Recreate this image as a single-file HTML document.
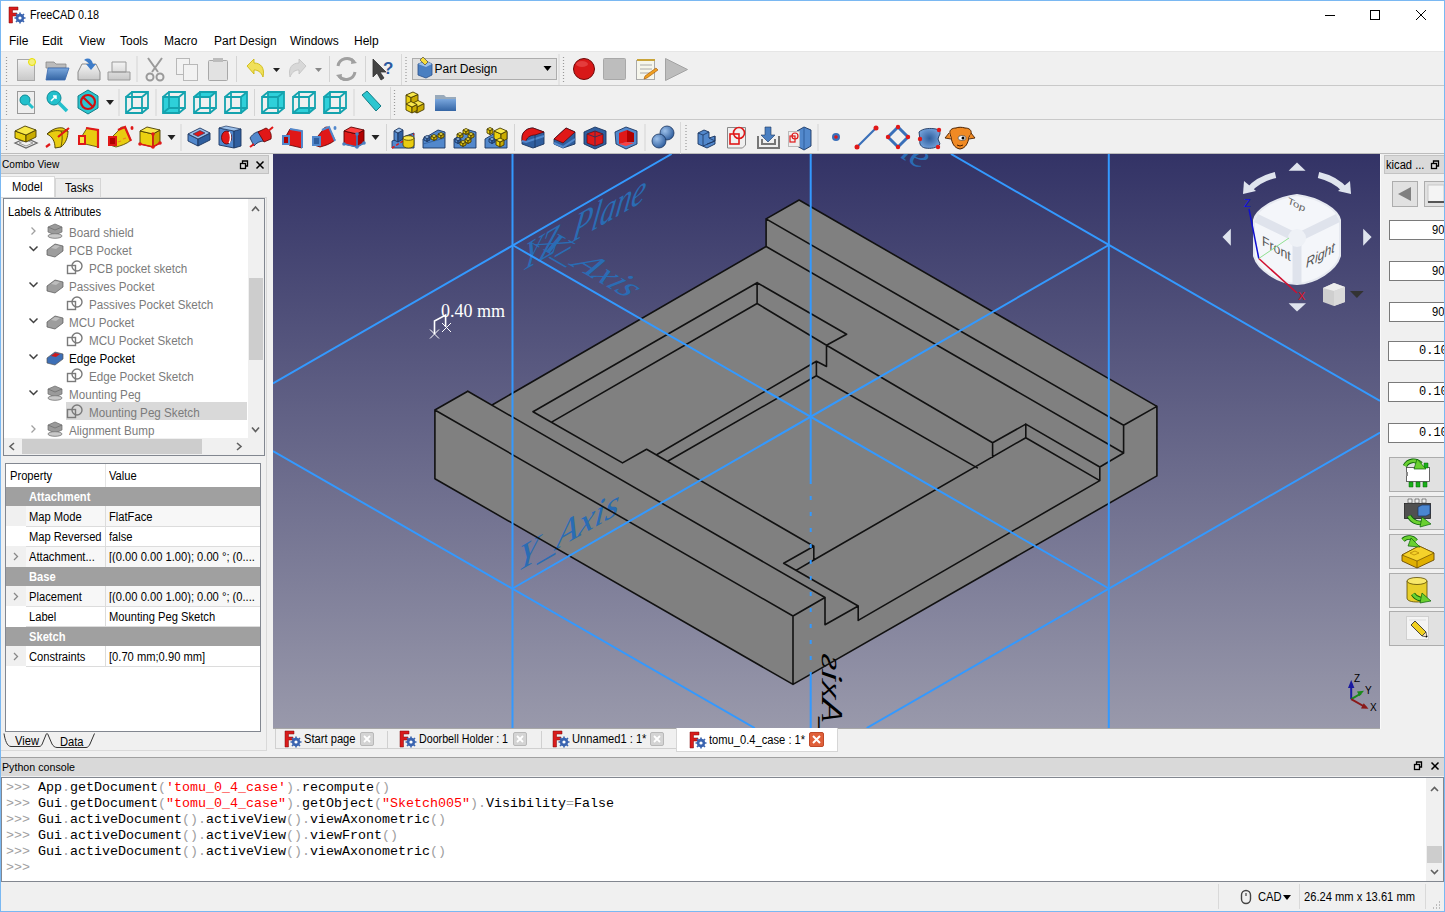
<!DOCTYPE html>
<html><head><meta charset="utf-8">
<style>
*{margin:0;padding:0;box-sizing:border-box}
html,body{width:1445px;height:912px;overflow:hidden;background:#f0f0f0;font-family:"Liberation Sans",sans-serif;font-size:12px;color:#000}
.a{position:absolute}
.t{position:absolute;white-space:nowrap;line-height:1;transform-origin:0 0;transform:scaleX(.93)}
.m{transform:none}
svg{position:absolute;overflow:visible}
</style></head><body>
<!-- window frame -->

<!-- title + menu -->
<div class="a" style="left:1px;top:1px;width:1443px;height:50px;background:#fff"></div>
<div class="a" style="left:1px;top:51px;width:1443px;height:1px;background:#e6e6e6"></div>
<!--TITLE-->
<div class="t" style="left:30px;top:9px;transform:scaleX(.9)">FreeCAD 0.18</div>
<div class="t" style="left:9px;top:35px;transform:none">File</div>
<div class="t" style="left:42px;top:35px;transform:none">Edit</div>
<div class="t" style="left:79px;top:35px;transform:none">View</div>
<div class="t" style="left:120px;top:35px;transform:none">Tools</div>
<div class="t" style="left:164px;top:35px;transform:none">Macro</div>
<div class="t" style="left:214px;top:35px;transform:none">Part Design</div>
<div class="t" style="left:290px;top:35px;transform:none">Windows</div>
<div class="t" style="left:354px;top:35px;transform:none">Help</div>
<svg style="left:0;top:0" width="1445" height="30">
<line x1="1325" y1="15.5" x2="1335" y2="15.5" stroke="#000" stroke-width="1"/>
<rect x="1370.5" y="10.5" width="9" height="9" fill="none" stroke="#000" stroke-width="1"/>
<path d="M1416 10L1426 20M1426 10L1416 20" stroke="#000" stroke-width="1"/>
</svg>
<!-- toolbar separators -->
<div class="a" style="left:1px;top:85px;width:1443px;height:1px;background:#c9c9c9"></div>
<div class="a" style="left:1px;top:119px;width:1443px;height:1px;background:#c9c9c9"></div>
<div class="a" style="left:1px;top:153px;width:1443px;height:1px;background:#bcbcbc"></div>

<svg style="left:0;top:52px" width="1445" height="102">
<defs>
<linearGradient id="gy" x1="0" y1="0" x2="0" y2="1"><stop offset="0" stop-color="#fdf56a"/><stop offset="1" stop-color="#d9c400"/></linearGradient>
<linearGradient id="gb" x1="0" y1="0" x2="0" y2="1"><stop offset="0" stop-color="#7aa7dd"/><stop offset="1" stop-color="#3465a4"/></linearGradient>
<linearGradient id="gc" x1="0" y1="0" x2="0" y2="1"><stop offset="0" stop-color="#4fe0ea"/><stop offset="1" stop-color="#14b5c2"/></linearGradient>
<linearGradient id="gg" x1="0" y1="0" x2="0" y2="1"><stop offset="0" stop-color="#f4f4f4"/><stop offset="1" stop-color="#c8c8c8"/></linearGradient>
<g id="grip"><path d="M0 0v1M0 3v1M0 6v1M0 9v1M0 12v1M0 15v1M0 18v1M0 21v1M0 24v1" stroke="#9a9a9a" stroke-width="1.2"/></g>
</defs>
<!-- ROW 1 : center y = 17 (abs 69) -->
<path transform="translate(6.5 5.0)" d="M0 0v1M0 3v1M0 6v1M0 9v1M0 12v1M0 15v1M0 18v1M0 21v1M0 24v1" stroke="#9a9a9a" stroke-width="1.2"/>
<rect x="17.5" y="7.5" width="17" height="21" fill="url(#gg)" stroke="#a8a8a8"/><circle cx="32" cy="10" r="3.5" fill="#f5f07a" stroke="#e8e000"/>
<path d="M46 10h8l2 2h10v4H46z" fill="#bbb" stroke="#888" stroke-width=".8"/><path d="M48 16h21l-4 12H46z" fill="url(#gb)" stroke="#3a6ab0" stroke-width=".8"/>
<path d="M78 20l4-8h14l4 8v8H78z" fill="url(#gg)" stroke="#8a8a8a"/><path d="M84 8c4-3 8-1 9 4h3l-5 6-5-6h3c-1-2-3-3-5-4z" fill="#3d7cc9"/>
<path d="M108 20h22v8h-22z M112 10h14v10h-14z" fill="url(#gg)" stroke="#9a9a9a"/>
<rect x="136.5" y="4" width="1" height="26" fill="#d4d4d4"/>
<path d="M148 6l10 14M162 6l-10 14" stroke="#9a9a9a" stroke-width="2"/><circle cx="150" cy="25" r="3.5" fill="none" stroke="#9a9a9a" stroke-width="2"/><circle cx="160" cy="25" r="3.5" fill="none" stroke="#9a9a9a" stroke-width="2"/>
<rect x="176.5" y="6.5" width="13" height="16" fill="#f2f2f2" stroke="#b8b8b8"/><rect x="183.5" y="12.5" width="14" height="16" fill="#f2f2f2" stroke="#b8b8b8"/>
<rect x="208.5" y="8.5" width="19" height="20" rx="1" fill="#e2e2e2" stroke="#a8a8a8"/><rect x="213" y="6" width="10" height="4" fill="#bcbcbc"/>
<rect x="236" y="4" width="1" height="26" fill="#d4d4d4"/>
<path d="M247 14l7-7v4c7 0 11 5 9 14-2-5-5-7-9-7v4z" fill="#f0e05a" stroke="#c9b400" stroke-width=".8"/><path d="M273 16h7l-3.5 4z" fill="#222"/>
<path d="M306 14l-7-7v4c-7 0-11 5-9 14 2-5 5-7 9-7v4z" fill="#d8d8d8" stroke="#c0c0c0" stroke-width=".8"/><path d="M315 16h7l-3.5 4z" fill="#888"/>
<rect x="329" y="4" width="1" height="26" fill="#d4d4d4"/>
<path d="M338 14a9 9 0 0 1 16-4M355 20a9 9 0 0 1-16 4" fill="none" stroke="#a0a0a0" stroke-width="3"/><path d="M352 6l5 5-6 1z M341 28l-5-5 6-1z" fill="#a0a0a0"/>
<rect x="365" y="4" width="1" height="26" fill="#d4d4d4"/>
<path d="M373 7l0 18 4-4 4 7 3-2-4-6 6 0z" fill="#444" stroke="#333" stroke-width=".8"/><text x="383" y="22" font-family="Liberation Sans" font-size="17" font-weight="bold" fill="#2c5aa0">?</text>
<rect x="401" y="2" width="1" height="31" fill="#d8d8d8"/>
<path transform="translate(406.0 5.0)" d="M0 0v1M0 3v1M0 6v1M0 9v1M0 12v1M0 15v1M0 18v1M0 21v1M0 24v1" stroke="#9a9a9a" stroke-width="1.2"/>
<rect x="412.5" y="6.5" width="144" height="21" fill="#e1e1e1" stroke="#adadad"/>
<path d="M418 12l8-3 6 3v11l-6 3-8-3z" fill="#4a7fc1" stroke="#2a4f8a" stroke-width=".8"/><path d="M418 12l8-3 6 3-6 3z" fill="#9cc1ea"/><path d="M420 8l5 5 3-3-5-5z" fill="#f5dc3a" stroke="#333" stroke-width=".6"/>
<text x="434.5" y="21" font-family="Liberation Sans" font-size="12" fill="#000">Part Design</text>
<path d="M543.5 14h8l-4 5z" fill="#000"/>
<rect x="558.5" y="2" width="1" height="31" fill="#d8d8d8"/>
<path transform="translate(563.5 5.0)" d="M0 0v1M0 3v1M0 6v1M0 9v1M0 12v1M0 15v1M0 18v1M0 21v1M0 24v1" stroke="#9a9a9a" stroke-width="1.2"/>
<circle cx="584" cy="17" r="10.5" fill="#d81818" stroke="#6e0a0a" stroke-width="1"/><ellipse cx="582" cy="12" rx="6" ry="3" fill="#f06060" opacity=".5"/>
<rect x="603.5" y="6.5" width="22" height="21" rx="1" fill="#bdbdbd" stroke="#a8a8a8"/>
<rect x="636.5" y="8.5" width="18" height="19" fill="#f6f6ec" stroke="#aaa"/><path d="M637 8h18" stroke="#c9a43a" stroke-width="2"/><path d="M640 13h12M640 17h12M640 21h10" stroke="#999" stroke-width=".8"/><path d="M645 24l11-8 2 2-11 8-3 1z" fill="#f0a020" stroke="#a05000" stroke-width=".6"/>
<path d="M665.5 6.5l22 11-22 11z" fill="#bdbdbd" stroke="#a3a3a3"/>
</svg>


<svg style="left:0;top:86px" width="1445" height="68">
<defs>
<g id="grip2"><path d="M0 0v1M0 3v1M0 6v1M0 9v1M0 12v1M0 15v1M0 18v1M0 21v1M0 24v1" stroke="#9a9a9a" stroke-width="1.2"/></g>
<g id="cubeW"><path d="M2 6l8-4h12v16l-8 4H2z" fill="none" stroke="#1a9aa6" stroke-width="2"/><path d="M2 6h12v16M14 6l8-4" fill="none" stroke="#1a9aa6" stroke-width="2"/></g>
</defs>
<!-- ROW 2 center local y=16 -->
<path transform="translate(6.5 4.0)" d="M0 0v1M0 3v1M0 6v1M0 9v1M0 12v1M0 15v1M0 18v1M0 21v1M0 24v1" stroke="#9a9a9a" stroke-width="1.2"/>
<rect x="17.5" y="5.5" width="17" height="22" fill="#eee" stroke="#999"/><circle cx="25" cy="14" r="5" fill="#22c0cc" stroke="#0d8a95"/><path d="M28 17l5 5" stroke="#22c0cc" stroke-width="3"/>
<circle cx="54" cy="12" r="7" fill="#22c0cc" stroke="#0d8a95"/><path d="M59 17l8 8" stroke="#22c0cc" stroke-width="3.5"/><path d="M51 15l5-5M53 10h3v3" stroke="#fff" stroke-width="1.5" fill="none"/>
<path d="M88 4l10 6v12l-10 6-10-6V10z" fill="#2cc6d0" stroke="#137f88"/><circle cx="88" cy="16" r="7" fill="none" stroke="#d01010" stroke-width="2.2"/><path d="M83 11l10 10" stroke="#d01010" stroke-width="2.2"/>
<path d="M106 14h8l-4 5z" fill="#222"/>
<rect x="118.5" y="3" width="1" height="27" fill="#d4d4d4"/>
<path d="M126 11h16v16h-16zM132 6h16v16h-16zM126 11L132 6M142 11L148 6M142 27L148 22M126 27L132 22" fill="none" stroke="#14a3ae" stroke-width="1.8"/>
<rect x="155.5" y="3" width="1" height="27" fill="#d4d4d4"/>
<path d="M163 11h16v16h-16z" fill="#2ed0da"/><path d="M163 11h16v16h-16zM169 6h16v16h-16zM163 11L169 6M179 11L185 6M179 27L185 22M163 27L169 22" fill="none" stroke="#14a3ae" stroke-width="1.8"/><path d="M194 11L200 6H216L210 11z" fill="#2ed0da"/><path d="M194 11h16v16h-16zM200 6h16v16h-16zM194 11L200 6M210 11L216 6M210 27L216 22M194 27L200 22" fill="none" stroke="#14a3ae" stroke-width="1.8"/><path d="M241 11L247 6V22L241 27z" fill="#2ed0da"/><path d="M225 11h16v16h-16zM231 6h16v16h-16zM225 11L231 6M241 11L247 6M241 27L247 22M225 27L231 22" fill="none" stroke="#14a3ae" stroke-width="1.8"/>
<rect x="254" y="3" width="1" height="27" fill="#d4d4d4"/>
<path d="M268 6h16v16h-16z" fill="#2ed0da"/><path d="M262 11h16v16h-16zM268 6h16v16h-16zM262 11L268 6M278 11L284 6M278 27L284 22M262 27L268 22" fill="none" stroke="#14a3ae" stroke-width="1.8"/><path d="M293 27L299 22H315L309 27z" fill="#2ed0da"/><path d="M293 11h16v16h-16zM299 6h16v16h-16zM293 11L299 6M309 11L315 6M309 27L315 22M293 27L299 22" fill="none" stroke="#14a3ae" stroke-width="1.8"/><path d="M324 11L330 6V22L324 27z" fill="#2ed0da"/><path d="M324 11h16v16h-16zM330 6h16v16h-16zM324 11L330 6M340 11L346 6M340 27L346 22M324 27L330 22" fill="none" stroke="#14a3ae" stroke-width="1.8"/>
<rect x="353.5" y="3" width="1" height="27" fill="#d4d4d4"/>
<path d="M362 9l5-4 14 15-5 5z" fill="#2cc6d0" stroke="#127c85"/>
<rect x="390" y="1" width="1" height="32" fill="#d8d8d8"/>
<path transform="translate(394.5 4.0)" d="M0 0v1M0 3v1M0 6v1M0 9v1M0 12v1M0 15v1M0 18v1M0 21v1M0 24v1" stroke="#9a9a9a" stroke-width="1.2"/>
<polygon points="406.0,9.0 411.0,11.5 411.0,20.5 406.0,18.0" fill="#ead010" stroke="#4a3c00" stroke-width="0.9" stroke-linejoin="round"/><polygon points="411.0,11.5 418.0,8.5 418.0,17.5 411.0,20.5" fill="#c9ab00" stroke="#4a3c00" stroke-width="0.9" stroke-linejoin="round"/><polygon points="406.0,9.0 413.0,6.0 418.0,8.5 411.0,11.5" fill="#f8e84a" stroke="#4a3c00" stroke-width="0.9" stroke-linejoin="round"/><polygon points="411.0,18.0 417.0,21.0 417.0,27.0 411.0,24.0" fill="#ead010" stroke="#4a3c00" stroke-width="0.9" stroke-linejoin="round"/><polygon points="417.0,21.0 424.0,17.5 424.0,23.5 417.0,27.0" fill="#c9ab00" stroke="#4a3c00" stroke-width="0.9" stroke-linejoin="round"/><polygon points="411.0,18.0 418.0,14.5 424.0,17.5 417.0,21.0" fill="#f8e84a" stroke="#4a3c00" stroke-width="0.9" stroke-linejoin="round"/><polygon points="406.0,18.0 412.0,21.0 412.0,27.0 406.0,24.0" fill="#ead010" stroke="#4a3c00" stroke-width="0.9" stroke-linejoin="round"/><polygon points="412.0,21.0 417.0,18.5 417.0,24.5 412.0,27.0" fill="#c9ab00" stroke="#4a3c00" stroke-width="0.9" stroke-linejoin="round"/><polygon points="406.0,18.0 411.0,15.5 417.0,18.5 412.0,21.0" fill="#f8e84a" stroke="#4a3c00" stroke-width="0.9" stroke-linejoin="round"/>
<path d="M435 9h9l2 2h10v14h-21z" fill="#9ab" /><path d="M435 13h21v12h-21z" fill="url(#gb)"/>
<!-- ROW 3 center local y=51 -->
<path transform="translate(6.5 39.0)" d="M0 0v1M0 3v1M0 6v1M0 9v1M0 12v1M0 15v1M0 18v1M0 21v1M0 24v1" stroke="#9a9a9a" stroke-width="1.2"/>
<polygon points="15,57 26,52 37,57 26,62" fill="none" stroke="#6a6a6a" stroke-width="1.3"/><polygon points="19,57 26,54 33,57 26,60" fill="none" stroke="#9a9a9a" stroke-width="1"/>
<polygon points="15.0,45.0 26.0,49.0 26.0,56.0 15.0,52.0" fill="#ead010" stroke="#4a3c00" stroke-width="0.9" stroke-linejoin="round"/><polygon points="26.0,49.0 36.0,44.0 36.0,51.0 26.0,56.0" fill="#c9ab00" stroke="#4a3c00" stroke-width="0.9" stroke-linejoin="round"/><polygon points="15.0,45.0 25.0,40.0 36.0,44.0 26.0,49.0" fill="#f8e84a" stroke="#4a3c00" stroke-width="0.9" stroke-linejoin="round"/>
<path d="M47 48C52 43 58 41 63 42L68 45C68 51 66 57 61 61L55 62C55 56 53 51 47 48z" fill="#e8cc10" stroke="#4a3c00" stroke-width=".9"/><path d="M47 48C51 45 56 44 61 45L68 45" fill="none" stroke="#4a3c00" stroke-width=".8"/><path d="M61 45C63 50 62 56 61 61" fill="none" stroke="#4a3c00" stroke-width=".8"/><path d="M46 61L50 58M58 51L69 42" stroke="#e01818" stroke-width="2.2"/>
<path d="M82 50L87 42L98 44L98 61L85 58z" fill="#e8cc10" stroke="#4a3c00" stroke-width=".8"/><path d="M86 42L98 44L98 62" fill="none" stroke="#e01818" stroke-width="2.2"/><rect x="79" y="50" width="6" height="8" fill="#f8e84a" stroke="#e01818" stroke-width="2"/>
<path d="M113 50L118 45C120 41 123 40 125 42L131 54C127 58 120 60 116 61L110 59z" fill="#e8cc10" stroke="#4a3c00" stroke-width=".8"/><path d="M118 44L125 41L131 55" fill="none" stroke="#e01818" stroke-width="2.2"/><rect x="109" y="51" width="7" height="8" fill="#b00000" stroke="#e01818" stroke-width="2"/><ellipse cx="132" cy="42" rx="1.5" ry="2" fill="#e01818"/><path d="M118 56l3-1M123 53l3-1" stroke="#f08020" stroke-width="1.2"/>
<polygon points="140.0,45.0 153.0,48.0 153.0,61.0 140.0,58.0" fill="#ead010" stroke="#4a3c00" stroke-width="0.9" stroke-linejoin="round"/><polygon points="153.0,48.0 160.0,44.0 160.0,57.0 153.0,61.0" fill="#c9ab00" stroke="#4a3c00" stroke-width="0.9" stroke-linejoin="round"/><polygon points="140.0,45.0 147.0,41.0 160.0,44.0 153.0,48.0" fill="#f8e84a" stroke="#4a3c00" stroke-width="0.9" stroke-linejoin="round"/>
<path d="M153 48V61M140 58L153 61L160 57" fill="none" stroke="#e01818" stroke-width="1.6"/><circle cx="153" cy="48" r="1.8" fill="#e01818"/><circle cx="153" cy="61" r="1.8" fill="#e01818"/><circle cx="140" cy="58" r="1.8" fill="#e01818"/><circle cx="160" cy="57" r="1.8" fill="#e01818"/>
<path d="M167.5 49h8l-4 5z" fill="#222"/>
<rect x="180.5" y="38" width="1" height="27" fill="#d4d4d4"/>
<polygon points="188.0,48.0 198.0,53.0 198.0,60.0 188.0,55.0" fill="#5288cc" stroke="#1b3560" stroke-width="0.9" stroke-linejoin="round"/><polygon points="198.0,53.0 210.0,47.0 210.0,54.0 198.0,60.0" fill="#2f5e9e" stroke="#1b3560" stroke-width="0.9" stroke-linejoin="round"/><polygon points="188.0,48.0 200.0,42.0 210.0,47.0 198.0,53.0" fill="#9cc0ea" stroke="#1b3560" stroke-width="0.9" stroke-linejoin="round"/>
<polygon points="193,48 200,44.5 205,47 198,50.5" fill="#e01818" stroke="#1b3560" stroke-width=".6"/>
<path d="M219 42L234 45V62L219 59z" fill="#5288cc" stroke="#1b3560" stroke-width=".9"/><path d="M234 45L241 43V60L234 62z" fill="#2f5e9e" stroke="#1b3560" stroke-width=".9"/><path d="M219 42L226 40L241 43L234 45z" fill="#9cc0ea" stroke="#1b3560" stroke-width=".7"/><ellipse cx="226.5" cy="51.5" rx="5" ry="6.5" fill="#e01818" stroke="#5a0000" stroke-width=".8"/><path d="M229 46c2 2 2 9 0 11" stroke="#fff" stroke-width="1.5" fill="none"/>
<path d="M250 52C253 47 258 45 262 45L264 55C260 55 256 57 254 60z" fill="#5288cc" stroke="#1b3560" stroke-width=".9"/><path d="M258 46L266 42C270 44 272 48 271 53L264 56z" fill="#e01818" stroke="#5a0000" stroke-width=".8"/><path d="M250 61L254 58M266 47L273 41" stroke="#e01818" stroke-width="2"/>
<path d="M286 50L290 43L302 45V62L289 59z" fill="#e01818" stroke="#5a0000" stroke-width=".8"/><path d="M290 43L302 45V62" fill="none" stroke="#5288cc" stroke-width="2"/><rect x="283" y="50" width="6" height="8" fill="#b00000" stroke="#5288cc" stroke-width="2"/>
<path d="M318 50L322 45C324 41 327 40 329 42L335 54C331 58 324 60 320 61L314 59z" fill="#e01818" stroke="#5a0000" stroke-width=".8"/><path d="M322 44L329 41L335 55" fill="none" stroke="#5288cc" stroke-width="2"/><rect x="313" y="51" width="7" height="8" fill="#2f5e9e" stroke="#5288cc" stroke-width="2"/><ellipse cx="335" cy="42" rx="1.5" ry="2" fill="#5288cc"/>
<polygon points="344.0,45.0 357.0,48.0 357.0,61.0 344.0,58.0" fill="#e01818" stroke="#5a0000" stroke-width="0.9" stroke-linejoin="round"/><polygon points="357.0,48.0 364.0,44.0 364.0,57.0 357.0,61.0" fill="#b00000" stroke="#5a0000" stroke-width="0.9" stroke-linejoin="round"/><polygon points="344.0,45.0 351.0,41.0 364.0,44.0 357.0,48.0" fill="#ff4040" stroke="#5a0000" stroke-width="0.9" stroke-linejoin="round"/>
<path d="M357 48V61M344 58L357 61L364 57" fill="none" stroke="#4a7fc1" stroke-width="1.6"/><circle cx="357" cy="48" r="1.8" fill="#4a7fc1"/><circle cx="357" cy="61" r="1.8" fill="#4a7fc1"/><circle cx="344" cy="58" r="1.8" fill="#4a7fc1"/><circle cx="364" cy="57" r="1.8" fill="#4a7fc1"/>
<path d="M371.5 49h8l-4 5z" fill="#222"/>
<rect x="386" y="38" width="1" height="27" fill="#d4d4d4"/>
<path d="M392 55L414 47V62H392z" fill="#5288cc" stroke="#1b3560" stroke-width=".9"/>
<polygon points="394.0,45.0 398.0,47.0 398.0,56.0 394.0,54.0" fill="#5288cc" stroke="#1b3560" stroke-width="0.9" stroke-linejoin="round"/><polygon points="398.0,47.0 403.0,44.0 403.0,53.0 398.0,56.0" fill="#2f5e9e" stroke="#1b3560" stroke-width="0.9" stroke-linejoin="round"/><polygon points="394.0,45.0 399.0,42.0 403.0,44.0 398.0,47.0" fill="#9cc0ea" stroke="#1b3560" stroke-width="0.9" stroke-linejoin="round"/>
<path d="M392 62L414 48" stroke="#e01818" stroke-width="1.5" stroke-dasharray="3 2"/><path d="M403 52v7c0 2 3 3 5.5 3s5.5-1 5.5-3v-7z" fill="#e8cc10" stroke="#4a3c00" stroke-width=".8"/><ellipse cx="408.5" cy="52" rx="5.5" ry="2.3" fill="#f8e84a" stroke="#4a3c00" stroke-width=".8"/>
<path d="M423 53L438 44L445 46V62H423z" fill="#5288cc" stroke="#1b3560" stroke-width=".9"/><path d="M423 58L445 52" stroke="#2f5e9e" stroke-width=".8"/>
<polygon points="424.0,51.0 427.0,52.5 427.0,55.5 424.0,54.0" fill="#5288cc" stroke="#1b3560" stroke-width="0.9" stroke-linejoin="round"/><polygon points="427.0,52.5 430.0,51.0 430.0,54.0 427.0,55.5" fill="#2f5e9e" stroke="#1b3560" stroke-width="0.9" stroke-linejoin="round"/><polygon points="424.0,51.0 427.0,49.5 430.0,51.0 427.0,52.5" fill="#9cc0ea" stroke="#1b3560" stroke-width="0.9" stroke-linejoin="round"/>
<polygon points="431.0,50.0 434.0,51.5 434.0,54.5 431.0,53.0" fill="#ead010" stroke="#4a3c00" stroke-width="0.9" stroke-linejoin="round"/><polygon points="434.0,51.5 437.0,50.0 437.0,53.0 434.0,54.5" fill="#c9ab00" stroke="#4a3c00" stroke-width="0.9" stroke-linejoin="round"/><polygon points="431.0,50.0 434.0,48.5 437.0,50.0 434.0,51.5" fill="#f8e84a" stroke="#4a3c00" stroke-width="0.9" stroke-linejoin="round"/>
<polygon points="438.0,48.0 441.0,49.5 441.0,52.5 438.0,51.0" fill="#ead010" stroke="#4a3c00" stroke-width="0.9" stroke-linejoin="round"/><polygon points="441.0,49.5 444.0,48.0 444.0,51.0 441.0,52.5" fill="#c9ab00" stroke="#4a3c00" stroke-width="0.9" stroke-linejoin="round"/><polygon points="438.0,48.0 441.0,46.5 444.0,48.0 441.0,49.5" fill="#f8e84a" stroke="#4a3c00" stroke-width="0.9" stroke-linejoin="round"/>
<path d="M454 53L469 44L476 46V62H454z" fill="#5288cc" stroke="#1b3560" stroke-width=".9"/>
<polygon points="457.0,48.0 460.0,49.5 460.0,52.5 457.0,51.0" fill="#ead010" stroke="#4a3c00" stroke-width="0.9" stroke-linejoin="round"/><polygon points="460.0,49.5 463.0,48.0 463.0,51.0 460.0,52.5" fill="#c9ab00" stroke="#4a3c00" stroke-width="0.9" stroke-linejoin="round"/><polygon points="457.0,48.0 460.0,46.5 463.0,48.0 460.0,49.5" fill="#f8e84a" stroke="#4a3c00" stroke-width="0.9" stroke-linejoin="round"/>
<polygon points="463.0,44.0 466.0,45.5 466.0,48.5 463.0,47.0" fill="#ead010" stroke="#4a3c00" stroke-width="0.9" stroke-linejoin="round"/><polygon points="466.0,45.5 469.0,44.0 469.0,47.0 466.0,48.5" fill="#c9ab00" stroke="#4a3c00" stroke-width="0.9" stroke-linejoin="round"/><polygon points="463.0,44.0 466.0,42.5 469.0,44.0 466.0,45.5" fill="#f8e84a" stroke="#4a3c00" stroke-width="0.9" stroke-linejoin="round"/>
<polygon points="468.0,48.0 471.0,49.5 471.0,52.5 468.0,51.0" fill="#ead010" stroke="#4a3c00" stroke-width="0.9" stroke-linejoin="round"/><polygon points="471.0,49.5 474.0,48.0 474.0,51.0 471.0,52.5" fill="#c9ab00" stroke="#4a3c00" stroke-width="0.9" stroke-linejoin="round"/><polygon points="468.0,48.0 471.0,46.5 474.0,48.0 471.0,49.5" fill="#f8e84a" stroke="#4a3c00" stroke-width="0.9" stroke-linejoin="round"/>
<polygon points="455.0,53.0 458.0,54.5 458.0,57.5 455.0,56.0" fill="#5288cc" stroke="#1b3560" stroke-width="0.9" stroke-linejoin="round"/><polygon points="458.0,54.5 461.0,53.0 461.0,56.0 458.0,57.5" fill="#2f5e9e" stroke="#1b3560" stroke-width="0.9" stroke-linejoin="round"/><polygon points="455.0,53.0 458.0,51.5 461.0,53.0 458.0,54.5" fill="#9cc0ea" stroke="#1b3560" stroke-width="0.9" stroke-linejoin="round"/>
<polygon points="465.0,53.0 468.0,54.5 468.0,57.5 465.0,56.0" fill="#ead010" stroke="#4a3c00" stroke-width="0.9" stroke-linejoin="round"/><polygon points="468.0,54.5 471.0,53.0 471.0,56.0 468.0,57.5" fill="#c9ab00" stroke="#4a3c00" stroke-width="0.9" stroke-linejoin="round"/><polygon points="465.0,53.0 468.0,51.5 471.0,53.0 468.0,54.5" fill="#f8e84a" stroke="#4a3c00" stroke-width="0.9" stroke-linejoin="round"/>
<polygon points="460.0,56.0 463.0,57.5 463.0,60.5 460.0,59.0" fill="#ead010" stroke="#4a3c00" stroke-width="0.9" stroke-linejoin="round"/><polygon points="463.0,57.5 466.0,56.0 466.0,59.0 463.0,60.5" fill="#c9ab00" stroke="#4a3c00" stroke-width="0.9" stroke-linejoin="round"/><polygon points="460.0,56.0 463.0,54.5 466.0,56.0 463.0,57.5" fill="#f8e84a" stroke="#4a3c00" stroke-width="0.9" stroke-linejoin="round"/>
<path d="M485 53L500 44L507 46V62H485z" fill="#5288cc" stroke="#1b3560" stroke-width=".9"/>
<polygon points="494.0,45.0 501.0,48.0 501.0,56.0 494.0,53.0" fill="#ead010" stroke="#4a3c00" stroke-width="0.9" stroke-linejoin="round"/><polygon points="501.0,48.0 507.0,45.0 507.0,53.0 501.0,56.0" fill="#c9ab00" stroke="#4a3c00" stroke-width="0.9" stroke-linejoin="round"/><polygon points="494.0,45.0 500.0,42.0 507.0,45.0 501.0,48.0" fill="#f8e84a" stroke="#4a3c00" stroke-width="0.9" stroke-linejoin="round"/>
<polygon points="487.0,43.0 490.0,44.5 490.0,48.5 487.0,47.0" fill="#ead010" stroke="#4a3c00" stroke-width="0.9" stroke-linejoin="round"/><polygon points="490.0,44.5 493.0,43.0 493.0,47.0 490.0,48.5" fill="#c9ab00" stroke="#4a3c00" stroke-width="0.9" stroke-linejoin="round"/><polygon points="487.0,43.0 490.0,41.5 493.0,43.0 490.0,44.5" fill="#f8e84a" stroke="#4a3c00" stroke-width="0.9" stroke-linejoin="round"/>
<polygon points="489.0,53.0 492.0,54.5 492.0,57.5 489.0,56.0" fill="#5288cc" stroke="#1b3560" stroke-width="0.9" stroke-linejoin="round"/><polygon points="492.0,54.5 495.0,53.0 495.0,56.0 492.0,57.5" fill="#2f5e9e" stroke="#1b3560" stroke-width="0.9" stroke-linejoin="round"/><polygon points="489.0,53.0 492.0,51.5 495.0,53.0 492.0,54.5" fill="#9cc0ea" stroke="#1b3560" stroke-width="0.9" stroke-linejoin="round"/>
<polygon points="496.0,54.0 500.0,56.0 500.0,61.0 496.0,59.0" fill="#ead010" stroke="#4a3c00" stroke-width="0.9" stroke-linejoin="round"/><polygon points="500.0,56.0 504.0,54.0 504.0,59.0 500.0,61.0" fill="#c9ab00" stroke="#4a3c00" stroke-width="0.9" stroke-linejoin="round"/><polygon points="496.0,54.0 500.0,52.0 504.0,54.0 500.0,56.0" fill="#f8e84a" stroke="#4a3c00" stroke-width="0.9" stroke-linejoin="round"/>
<rect x="514" y="38" width="1" height="27" fill="#d4d4d4"/>
<path d="M522 52C522 45 528 42 533 42L544 46V58L533 62L522 58z" fill="#2f5e9e" stroke="#1b3560" stroke-width=".9"/><path d="M522 52C522 45 528 42 533 42L544 46L535 49C530 49 526 52 526 56L522 55z" fill="#e01818" stroke="#5a0000" stroke-width=".7"/><path d="M522 55L526 56L535 53L544 50" fill="none" stroke="#5288cc" stroke-width="2"/><path d="M535 49V62" stroke="#1b3560" stroke-width=".8"/>
<path d="M554 53L566 42L575 46V58L563 62L554 58z" fill="#2f5e9e" stroke="#1b3560" stroke-width=".9"/><path d="M554 53L566 42L575 46L563 57z" fill="#e01818" stroke="#5a0000" stroke-width=".7"/><path d="M554 57L563 61L575 53" fill="none" stroke="#5288cc" stroke-width="2"/>
<path d="M584 46L595 41L606 45V58L595 63L584 58z" fill="#2f5e9e" stroke="#1b3560" stroke-width=".9"/><path d="M587 48L595 45L603 48V57L595 60L587 57z" fill="#e01818" stroke="#5a0000" stroke-width=".6"/><path d="M595 45V60M587 48L595 51L603 48" fill="none" stroke="#1b3560" stroke-width=".8"/>
<path d="M615 46L626 41L637 45V58L626 63L616 58z" fill="#5288cc" stroke="#1b3560" stroke-width=".9"/><path d="M619 47L627 44V56L619 58z" fill="#e01818"/><path d="M627 44L634 47V56L627 56z" fill="#b00000"/><path d="M619 58L627 56L634 57L626 60z" fill="#ff4040"/>
<rect x="644.5" y="38" width="1" height="27" fill="#d4d4d4"/>
<defs><radialGradient id="sph" cx=".35" cy=".35" r=".7"><stop offset="0" stop-color="#9cc0ea"/><stop offset="1" stop-color="#2f5e9e"/></radialGradient></defs><circle cx="667" cy="47" r="7" fill="url(#sph)" stroke="#1b3560" stroke-width=".8"/><circle cx="659" cy="55" r="7" fill="url(#sph)" stroke="#1b3560" stroke-width=".8"/>
<rect x="680" y="36" width="1" height="32" fill="#d8d8d8"/>
<path transform="translate(686.0 39.0)" d="M0 0v1M0 3v1M0 6v1M0 9v1M0 12v1M0 15v1M0 18v1M0 21v1M0 24v1" stroke="#9a9a9a" stroke-width="1.2"/>
<path d="M698 47L704 44L709 46V52L715 50V58L707 62L698 58z" fill="#5288cc" stroke="#1b3560" stroke-width=".9"/><path d="M698 47L703 49V60M703 49L709 46M709 52L715 55L707 58M715 50L715 55" fill="none" stroke="#1b3560" stroke-width=".8"/><path d="M703 60L715 55" stroke="#1b3560" stroke-width=".8"/>
<path d="M727.5 41.5H745.5V59L742.5 62H727.5z" fill="#f0f0f0" stroke="#888"/><rect x="730" y="48" width="9" height="10" fill="none" stroke="#e01818" stroke-width="1.6"/><circle cx="739" cy="47" r="5.5" fill="none" stroke="#e01818" stroke-width="1.6"/>
<path d="M758 50V62H779V50M762 53V58H775V53" fill="none" stroke="#777" stroke-width="2"/><path d="M765 41H771V49H775L768 56L761 49H765z" fill="#4a7fc1" stroke="#1b3560" stroke-width=".6"/>
<path d="M797 45L804 41L811 44V60L804 64L797 60z" fill="#5288cc" stroke="#1b3560" stroke-width=".9"/><path d="M804 41V64" stroke="#2f5e9e"/><rect x="788.5" y="45.5" width="11" height="15" fill="#eee" stroke="#bbb"/><rect x="790" y="50" width="5" height="6" fill="none" stroke="#e01818" stroke-width="1.2"/><circle cx="795" cy="50" r="3" fill="none" stroke="#e01818" stroke-width="1.2"/>
<rect x="817.5" y="38" width="1" height="27" fill="#d4d4d4"/>
<circle cx="836" cy="51" r="4" fill="#3a6fb8"/><circle cx="836" cy="51" r="1.8" fill="#e01818"/>
<path d="M857 61L876 42" stroke="#3a6fb8" stroke-width="2.2"/><circle cx="857" cy="61" r="2.5" fill="#e01818"/><circle cx="876" cy="42" r="2.5" fill="#e01818"/>
<path d="M898 41L908 51L898 61L888 51z" fill="none" stroke="#3a6fb8" stroke-width="3"/><circle cx="898" cy="41" r="2.2" fill="#e01818"/><circle cx="908" cy="51" r="2.2" fill="#e01818"/><circle cx="898" cy="61" r="2.2" fill="#e01818"/><circle cx="888" cy="51" r="2.2" fill="#e01818"/>
<defs><radialGradient id="lcs" cx=".5" cy=".5" r=".6"><stop offset="0" stop-color="#2f5e9e"/><stop offset="1" stop-color="#7aa8e0"/></radialGradient></defs><path d="M919 46C923 42 931 42 936 43C940 44 941 47 939 50L938 53L940 58C937 62 931 63 925 62C921 61 919 58 920 54z" fill="url(#lcs)" stroke="#1b3560" stroke-width=".9"/><circle cx="920" cy="53" r="2.2" fill="#e01818"/><circle cx="939" cy="44" r="2.2" fill="#e01818"/><circle cx="938" cy="61" r="2.2" fill="#e01818"/>
<path d="M950 48C949 44 952 42 956 42C958 41 962 41 965 42C969 42 972 44 971 48L969 51C968 57 966 62 960 63C954 62 952 57 951 51z" fill="#f08a24" stroke="#4a2000" stroke-width="1"/><path d="M949 47L945 52L951 53M971 47L975 52L969 53" fill="#f08a24" stroke="#4a2000" stroke-width=".9"/><ellipse cx="962" cy="52" rx="4" ry="2.5" fill="#fff" stroke="#333" stroke-width=".6"/><circle cx="963" cy="52" r="1.5" fill="#000"/><path d="M957 59q3 2 6 0" stroke="#4a2000" fill="none"/>
</svg>

<!--TOOLBARS-->

<!-- combo view -->
<div class="a" style="left:1px;top:155px;width:268px;height:19px;background:#dadada;border:1px solid #c3c3c3;border-left:none"></div>
<div class="t" style="left:2px;top:159px;color:#000;font-size:11px;transform:scaleX(.92)">Combo View</div>
<svg style="left:0;top:0" width="280" height="200"><rect x="240.5" y="163.5" width="5" height="5" fill="none" stroke="#000" stroke-width="1.3"/><path d="M242.5 163.5v-2.5h5v5h-2" fill="none" stroke="#000" stroke-width="1.3"/><path d="M256.5 161.5l7 7M263.5 161.5l-7 7" stroke="#000" stroke-width="1.5"/></svg>
<div class="a" style="left:55px;top:178px;width:46px;height:19px;background:#ececec;border:1px solid #d5d5d5;border-bottom:none"></div>
<div class="a" style="left:1px;top:176px;width:54px;height:23px;background:#fff;border:1px solid #d9d9d9;border-bottom:none;border-left:none"></div>
<div class="t" style="left:12px;top:181px">Model</div>
<div class="t" style="left:65px;top:182px">Tasks</div>
<div class="a" style="left:1px;top:197px;width:266px;height:554px;border:1px solid #d9d9d9;border-left:none;background:#f0f0f0"></div>
<!-- tree -->
<div class="a" style="left:3px;top:198px;width:262px;height:258px;background:#fff;border:1px solid #828790"></div>
<div class="a" style="left:248px;top:199px;width:16px;height:239px;background:#f0f0f0"></div>
<div class="a" style="left:249px;top:278px;width:14px;height:82px;background:#cdcdcd"></div>
<div class="a" style="left:4px;top:438px;width:244px;height:17px;background:#f0f0f0"></div>
<div class="a" style="left:22px;top:439px;width:180px;height:15px;background:#cdcdcd"></div>
<div class="a" style="left:248px;top:438px;width:16px;height:17px;background:#f0f0f0"></div>
<svg style="left:0;top:0" width="280" height="460">
<path d="M252 211l3.5-4 3.5 4" fill="none" stroke="#606060" stroke-width="1.6"/>
<path d="M252 427.5l3.5 4 3.5-4" fill="none" stroke="#606060" stroke-width="1.6"/>
<path d="M14 443l-4 3.5 4 3.5" fill="none" stroke="#606060" stroke-width="1.6"/>
<path d="M237 443l4 3.5-4 3.5" fill="none" stroke="#606060" stroke-width="1.6"/>
</svg>
<div class="t" style="left:8px;top:206px">Labels &amp; Attributes</div>
<div class="a" style="left:66px;top:402px;width:181px;height:18px;background:#d9d9d9"></div>

<div class="t" style="left:69px;top:227px;color:#7b7b7b;transform:scaleX(.97)">Board shield</div>
<div class="t" style="left:69px;top:245px;color:#7b7b7b;transform:scaleX(.97)">PCB Pocket</div>
<div class="t" style="left:89px;top:263px;color:#7b7b7b;transform:scaleX(.97)">PCB pocket sketch</div>
<div class="t" style="left:69px;top:281px;color:#7b7b7b;transform:scaleX(.97)">Passives Pocket</div>
<div class="t" style="left:89px;top:299px;color:#7b7b7b;transform:scaleX(.97)">Passives Pocket Sketch</div>
<div class="t" style="left:69px;top:317px;color:#7b7b7b;transform:scaleX(.97)">MCU Pocket</div>
<div class="t" style="left:89px;top:335px;color:#7b7b7b;transform:scaleX(.97)">MCU Pocket Sketch</div>
<div class="t" style="left:69px;top:353px;color:#000;transform:scaleX(.97)">Edge Pocket</div>
<div class="t" style="left:89px;top:371px;color:#7b7b7b;transform:scaleX(.97)">Edge Pocket Sketch</div>
<div class="t" style="left:69px;top:389px;color:#7b7b7b;transform:scaleX(.97)">Mounting Peg</div>
<div class="t" style="left:89px;top:407px;color:#7b7b7b;transform:scaleX(.97)">Mounting Peg Sketch</div>
<div class="t" style="left:69px;top:425px;color:#7b7b7b;transform:scaleX(.97)">Alignment Bump</div>
<svg style="left:0;top:0" width="280" height="460">
<path d="M31.5 227.5l3.5 3.5-3.5 3.5" fill="none" stroke="#a0a0a0" stroke-width="1.3"/>
<path d="M48 227l7-3 7 3v5l-7 3-7-3z" fill="#9a9a9a" stroke="#6a6a6a" stroke-width=".7"/><path d="M48 227l7 3 7-3" fill="none" stroke="#6a6a6a" stroke-width=".7"/><ellipse cx="55" cy="236" rx="7" ry="2.3" fill="#c8c8c8" stroke="#777" stroke-width=".8"/>
<path d="M29.5 246.5l4 4 4-4" fill="none" stroke="#404040" stroke-width="1.5"/>
<path d="M47 250l8-6 8 2v5l-8 6-8-2z" fill="#9d9d9d" stroke="#555" stroke-width=".7"/><path d="M51 248l4-3 5 1-4 3z" fill="#bdbdbd"/>
<rect x="67.5" y="265.5" width="8" height="8" fill="none" stroke="#7a7a7a" stroke-width="1.4"/><circle cx="77" cy="266" r="5" fill="none" stroke="#7a7a7a" stroke-width="1.4"/>
<path d="M29.5 282.5l4 4 4-4" fill="none" stroke="#404040" stroke-width="1.5"/>
<path d="M47 286l8-6 8 2v5l-8 6-8-2z" fill="#9d9d9d" stroke="#555" stroke-width=".7"/><path d="M51 284l4-3 5 1-4 3z" fill="#bdbdbd"/>
<rect x="67.5" y="301.5" width="8" height="8" fill="none" stroke="#7a7a7a" stroke-width="1.4"/><circle cx="77" cy="302" r="5" fill="none" stroke="#7a7a7a" stroke-width="1.4"/>
<path d="M29.5 318.5l4 4 4-4" fill="none" stroke="#404040" stroke-width="1.5"/>
<path d="M47 322l8-6 8 2v5l-8 6-8-2z" fill="#9d9d9d" stroke="#555" stroke-width=".7"/><path d="M51 320l4-3 5 1-4 3z" fill="#bdbdbd"/>
<rect x="67.5" y="337.5" width="8" height="8" fill="none" stroke="#7a7a7a" stroke-width="1.4"/><circle cx="77" cy="338" r="5" fill="none" stroke="#7a7a7a" stroke-width="1.4"/>
<path d="M29.5 354.5l4 4 4-4" fill="none" stroke="#404040" stroke-width="1.5"/>
<path d="M47 358l8-6 8 2v5l-8 6-8-2z" fill="#3d6fb6" stroke="#555" stroke-width=".7"/><path d="M51 356l4-3 5 1-4 3z" fill="#d01818"/>
<rect x="67.5" y="373.5" width="8" height="8" fill="none" stroke="#7a7a7a" stroke-width="1.4"/><circle cx="77" cy="374" r="5" fill="none" stroke="#7a7a7a" stroke-width="1.4"/>
<path d="M29.5 390.5l4 4 4-4" fill="none" stroke="#404040" stroke-width="1.5"/>
<path d="M48 389l7-3 7 3v5l-7 3-7-3z" fill="#9a9a9a" stroke="#6a6a6a" stroke-width=".7"/><path d="M48 389l7 3 7-3" fill="none" stroke="#6a6a6a" stroke-width=".7"/><ellipse cx="55" cy="398" rx="7" ry="2.3" fill="#c8c8c8" stroke="#777" stroke-width=".8"/>
<rect x="67.5" y="409.5" width="8" height="8" fill="none" stroke="#7a7a7a" stroke-width="1.4"/><circle cx="77" cy="410" r="5" fill="none" stroke="#7a7a7a" stroke-width="1.4"/>
<path d="M31.5 425.5l3.5 3.5-3.5 3.5" fill="none" stroke="#a0a0a0" stroke-width="1.3"/>
<path d="M48 425l7-3 7 3v5l-7 3-7-3z" fill="#9a9a9a" stroke="#6a6a6a" stroke-width=".7"/><path d="M48 425l7 3 7-3" fill="none" stroke="#6a6a6a" stroke-width=".7"/><ellipse cx="55" cy="434" rx="7" ry="2.3" fill="#c8c8c8" stroke="#777" stroke-width=".8"/>
</svg>

<div class="a" style="left:5px;top:463px;width:256px;height:269px;background:#fff;border:1px solid #828790"></div>
<div class="a" style="left:105px;top:464px;width:1px;height:23px;background:#e5e5e5"></div>
<div class="t" style="left:10px;top:470px">Property</div>
<div class="t" style="left:109px;top:470px">Value</div>
<div class="a" style="left:6px;top:487px;width:254px;height:19px;background:#a0a0a0"></div>
<div class="a" style="left:6px;top:567px;width:254px;height:19px;background:#a0a0a0"></div>
<div class="a" style="left:6px;top:627px;width:254px;height:19px;background:#a0a0a0"></div>
<div class="a" style="left:6px;top:506px;width:254px;height:20px;background:#f7f7f7"></div>
<div class="a" style="left:6px;top:546px;width:254px;height:21px;background:#f7f7f7"></div>
<div class="a" style="left:6px;top:586px;width:254px;height:20px;background:#f7f7f7"></div>
<div class="a" style="left:6px;top:646px;width:254px;height:20px;background:#fff"></div>
<div class="a" style="left:6px;top:506px;width:20px;height:20px;background:#f0f0f0"></div>
<div class="a" style="left:6px;top:526px;width:20px;height:20px;background:#fff"></div>
<div class="a" style="left:6px;top:546px;width:20px;height:21px;background:#f0f0f0"></div>
<div class="a" style="left:6px;top:586px;width:20px;height:20px;background:#f0f0f0"></div>
<div class="a" style="left:6px;top:646px;width:20px;height:20px;background:#f0f0f0"></div>

<div class="a" style="left:26px;top:526px;width:234px;height:1px;background:#dcdcdc"></div>
<div class="a" style="left:26px;top:546px;width:234px;height:1px;background:#dcdcdc"></div>
<div class="a" style="left:26px;top:606px;width:234px;height:1px;background:#dcdcdc"></div>
<div class="a" style="left:26px;top:626px;width:234px;height:1px;background:#dcdcdc"></div>
<div class="a" style="left:26px;top:666px;width:234px;height:1px;background:#dcdcdc"></div>
<div class="a" style="left:105px;top:506px;width:1px;height:61px;background:#dcdcdc"></div>
<div class="a" style="left:105px;top:586px;width:1px;height:41px;background:#dcdcdc"></div>
<div class="a" style="left:105px;top:646px;width:1px;height:21px;background:#dcdcdc"></div>
<div class="t" style="left:29px;top:491px;color:#fff;font-weight:bold">Attachment</div>
<div class="t" style="left:29px;top:511px">Map Mode</div>
<div class="t" style="left:109px;top:511px">FlatFace</div>
<div class="t" style="left:29px;top:531px">Map Reversed</div>
<div class="t" style="left:109px;top:531px">false</div>
<div class="t" style="left:29px;top:551px">Attachment...</div>
<div class="t" style="left:109px;top:551px;width:159px;overflow:hidden">[(0.00 0.00 1.00); 0.00 °; (0....</div>
<div class="t" style="left:29px;top:571px;color:#fff;font-weight:bold">Base</div>
<div class="t" style="left:29px;top:591px">Placement</div>
<div class="t" style="left:109px;top:591px;width:159px;overflow:hidden">[(0.00 0.00 1.00); 0.00 °; (0....</div>
<div class="t" style="left:29px;top:611px">Label</div>
<div class="t" style="left:109px;top:611px">Mounting Peg Sketch</div>
<div class="t" style="left:29px;top:631px;color:#fff;font-weight:bold">Sketch</div>
<div class="t" style="left:29px;top:651px">Constraints</div>
<div class="t" style="left:109px;top:651px">[0.70 mm;0.90 mm]</div>
<svg style="left:0;top:0" width="280" height="760">
<path d="M14 553l3.5 3.5-3.5 3.5M14 593l3.5 3.5-3.5 3.5M14 653l3.5 3.5-3.5 3.5" fill="none" stroke="#888" stroke-width="1.3"/>
<path d="M4 733.5C5 740 7 746.5 11 746.5H39C41 746.5 42 745 43 742L46.5 733.5" fill="none" stroke="#333" stroke-width="1"/><path d="M47.5 733.5L52 744C53 746 55 747.5 57 747.5H86C88 747.5 89 746 90 744L94.5 733.5" fill="none" stroke="#333" stroke-width="1"/>
</svg>
<div class="t" style="left:15px;top:735px">View</div>
<div class="t" style="left:60px;top:736px">Data</div>

<!--LEFTPANEL-->


<!-- viewport -->
<svg style="left:0;top:0" width="1445" height="912"><defs><linearGradient id="bg0" x1="0" y1="154" x2="0" y2="728" gradientUnits="userSpaceOnUse"><stop offset="0" stop-color="#333366"/><stop offset="1" stop-color="#9999ab"/></linearGradient></defs><rect x="273" y="154" width="1107" height="574" fill="url(#bg0)"/><polygon points="434.9,478.7 434.9,410 467.8,391.2 492.5,404.7 766.1,246.5 766.1,218.9 799.1,200 1156.9,406.4 1156.9,475.9 793,684.4" fill="#808080"/></svg>
<!-- viewport labels (inside clip) -->
<svg style="left:0;top:0" width="1445" height="912">
<defs><clipPath id="vpc2"><rect x="273" y="154" width="1107" height="574"/></clipPath></defs>
<g clip-path="url(#vpc2)" font-family="Liberation Serif" font-style="italic" font-size="35" fill="#2a6cb4">
<text transform="matrix(0.89 -0.515 -0.2 1.2 521 272)">YZ_Plane</text>
<text transform="matrix(0.866 0.5 -0.866 0.5 533 244)" font-size="38">X_Axis</text>
<text transform="matrix(1.04 -0.6 -0.1 1.08 517 572)">Y_Axis</text>
<text transform="matrix(0.866 0.5 -0.5 0.8 790 94)" font-size="38">XY_Plane</text>
<text transform="matrix(0 -1.14 -0.866 -0.5 821.6 761)" fill="#000">Z_Axis</text>
<text x="441" y="317" font-style="normal" font-size="18" fill="#fff">0.40 mm</text>
<path d="M434.5 334V321L445.6 315V327" fill="none" stroke="#fff" stroke-width="1.6"/>
<path d="M430 329.5l9 9M439 329.5l-9 9M442 323l9 9M451 323l-9 9" stroke="#fff" stroke-width="1"/>
</g>
</svg>
<svg style="left:0;top:0" width="1445" height="912">
<defs>
<linearGradient id="bg" x1="0" y1="154" x2="0" y2="728" gradientUnits="userSpaceOnUse"><stop offset="0" stop-color="#333366"/><stop offset="1" stop-color="#9999ab"/></linearGradient>
<clipPath id="vpc"><rect x="273" y="154" width="1107" height="574"/></clipPath>
</defs>

<g clip-path="url(#vpc)">

<path d="M434.9 410L434.9 478.7M434.9 478.7L793 684.4M434.9 410L793 616M793 616L793 684.4M793 684.4L1156.9 475.9M1156.9 406.4L1156.9 475.9M434.9 410L467.8 391.2M467.8 391.2L825 597.5M492.5 404.7L766.1 246.5M766.1 246.5L766.1 218.9M766.1 218.9L799.1 200M799.1 200L1156.9 406.4M766.1 218.9L1123.6 425.2M1123.6 425.2L1156.9 406.4M1123.6 425.2L1123.6 453M766.1 246.5L1123.6 453M533 411.7L757.1 282.7M757.1 282.7L757.1 303.5M552 421.9L757.1 303.5M533 411.7L622.5 462.9M622.5 462.9L646.6 449.3M646.6 449.3L813.8 546.3M757.1 282.7L846.6 334.3M846.6 334.3L826.5 345.3M757.1 303.5L826.5 345.3M826.5 345.3L826.5 366.5M826.5 366.5L816.4 361.3M816.4 361.3L816.4 375.8M657 454.5L816.4 361.3M668.1 461L816.4 375.8M826.5 345.3L992.6 442.7M816.4 375.8L977.3 467.9M992.6 442.7L1025.8 424.1M992.6 442.7L992.6 457.3M1025.8 424.1L1025.8 437.7M1025.8 424.1L1099.8 467M1025.8 437.7L1099.8 480.6M1099.8 467L1123.6 453M1099.8 467L1099.8 480.6M813.8 560L1025.8 437.7M813.8 546.3L813.8 560M783.7 563.3L813.8 546.3M783.7 563.3L858.2 606M796 570.4L813.8 560M858.2 606L858.2 620.4M858.2 620.4L1099.8 480.6M825 597.5L825 624.7M825 624.7L858.2 606M793 616L825 597.5" stroke="#111" stroke-width="1.6" fill="none" stroke-linecap="round" stroke-linejoin="round"/>
<g stroke="#3399ff" stroke-width="2" fill="none">
<path d="M512.5 154V728M1108.8 154V728M810.7 154V480M810.7 673V728"/>
<path d="M810.7 480V673" stroke-dasharray="4 12"/>
<path d="M273 383.4L671.6 154M512.5 245L1108.8 588.5M512.5 588.5L1108.8 245M951 154L1380 401M273 451L754.7 728M866.7 728L1380 432.5"/>
</g>
</g>
</svg>



<!-- nav cube + axis cross -->
<svg style="left:0;top:0" width="1445" height="912">
<g fill="#dfe4ee">
<path d="M1297 162.5L1305.6 170.8H1288.6z"/>
<path d="M1297 311.6L1306 303.2H1288.6z"/>
<path d="M1222.5 237L1230.8 228.7V245.7z"/>
<path d="M1371.6 237L1363.2 228.7V245.7z"/>
</g>
<path d="M1275.5 175C1263 178 1254 184 1249 190" fill="none" stroke="#dfe4ee" stroke-width="6"/>
<path d="M1243 194L1244 181L1256 191z" fill="#dfe4ee"/>
<path d="M1318.5 175C1331 178 1340 184 1345 190" fill="none" stroke="#dfe4ee" stroke-width="6"/>
<path d="M1351 194L1350 181L1338 191z" fill="#dfe4ee"/>
<path d="M1297 195C1320 198 1338 210 1340 220L1340 256C1336 270 1316 283 1297 284C1278 283 1258 270 1254 256L1254 220C1256 210 1274 198 1297 195z" fill="#f4f6fa" stroke="#e6e9f0" stroke-width="2"/>
<path d="M1297 238L1297 284M1297 238L1256 218M1297 238L1338 218" stroke="#dfe3ec" stroke-width="9" fill="none"/>
<circle cx="1297" cy="238" r="9" fill="#eef1f6"/>
<text transform="matrix(0.9 0.45 -0.2 0.7 1287 203)" font-family="Liberation Sans" font-size="12" fill="#666">Top</text>
<text transform="matrix(0.88 0.5 0 1 1262 245)" font-family="Liberation Sans" font-size="14" fill="#555">Front</text>
<text transform="matrix(0.88 -0.5 0 1 1306 268)" font-family="Liberation Sans" font-style="italic" font-size="14" fill="#555">Right</text>
<path d="M1258.8 258.5L1249 209" stroke="#1010d0" stroke-width="1.5"/>
<path d="M1258.8 258.5L1297 293" stroke="#d01030" stroke-width="1.5"/>
<path d="M1258.8 258.5L1289 238" stroke="#90e090" stroke-width="1"/>
<text x="1244" y="207" font-family="Liberation Sans" font-size="11" fill="#1010e0">Z</text>
<text x="1298" y="300" font-family="Liberation Sans" font-size="11" fill="#e01020">X</text>
<path d="M1323 288l11-5 11 4v15l-11 4-11-4z" fill="#cfcfcf"/><path d="M1323 288l11-5 11 4-11 4z" fill="#ececec"/><path d="M1334 291v15l11-4v-15z" fill="#dadada"/>
<path d="M1350 291h13.7l-6.8 7z" fill="#333"/>
<!-- axis cross -->
<path d="M1351.2 699.2V683" stroke="#1a1aa0" stroke-width="2"/><path d="M1348 688l3.2-8 3.2 8z" fill="#1a1aa0"/>
<path d="M1351.2 699.2L1361 693.5" stroke="#1a8a1a" stroke-width="2"/><path d="M1357 691.5l7-0.8-4.5 5.5z" fill="#1a8a1a"/>
<path d="M1351.2 699.2L1366 707.5" stroke="#8a1a1a" stroke-width="2"/><path d="M1361 708.5l7.5 0.3-4.8-5.5z" fill="#8a1a1a"/>
<text x="1354" y="682" font-family="Liberation Sans" font-size="10" fill="#000">Z</text>
<text x="1365" y="694" font-family="Liberation Sans" font-size="10" fill="#000">Y</text>
<text x="1370" y="711" font-family="Liberation Sans" font-size="10" fill="#000">X</text>
</svg>
<!--VIEWPORT-->


<!-- right panel -->
<div class="a" style="left:1380px;top:154px;width:1px;height:575px;background:#fafafa"></div>
<div class="a" style="left:1384px;top:155px;width:60px;height:19px;background:#dadada;border:1px solid #c3c3c3;border-right:none"></div>
<div class="t" style="left:1386px;top:159px">kicad ...</div>
<svg style="left:0;top:0" width="1445" height="912">
<rect x="1431.5" y="163.5" width="5" height="5" fill="none" stroke="#000" stroke-width="1.3"/><path d="M1433.5 163.5v-2.5h5v5h-2" fill="none" stroke="#000" stroke-width="1.3"/>
<rect x="1392.5" y="181.5" width="25" height="25" fill="#e1e1e1" stroke="#adadad"/>
<path d="M1398 194l13-7v14z" fill="#808080"/>
<rect x="1424.5" y="181.5" width="25" height="25" fill="#e1e1e1" stroke="#adadad"/>
<rect x="1428" y="185" width="16" height="17" fill="#f4f4f4" stroke="#c8c8c8"/><path d="M1428 202h16" stroke="#555" stroke-width="2"/>
</svg>
<div class="a" style="left:1389px;top:220px;width:60px;height:20px;background:#fff;border:1px solid #7a7a7a"></div>
<div class="t" style="left:1432px;top:224px;font-size:12px">90</div>
<div class="a" style="left:1389px;top:261px;width:60px;height:20px;background:#fff;border:1px solid #7a7a7a"></div>
<div class="t" style="left:1432px;top:265px;font-size:12px">90</div>
<div class="a" style="left:1389px;top:302px;width:60px;height:20px;background:#fff;border:1px solid #7a7a7a"></div>
<div class="t" style="left:1432px;top:306px;font-size:12px">90</div>
<div class="a" style="left:1388px;top:341px;width:60px;height:20px;background:#fff;border:1px solid #7a7a7a"></div>
<div class="t" style="left:1419px;top:345px;font-size:12px;font-family:'Liberation Mono',monospace;transform:none">0.10</div>
<div class="a" style="left:1388px;top:382px;width:60px;height:20px;background:#fff;border:1px solid #7a7a7a"></div>
<div class="t" style="left:1419px;top:386px;font-size:12px;font-family:'Liberation Mono',monospace;transform:none">0.10</div>
<div class="a" style="left:1388px;top:423px;width:60px;height:20px;background:#fff;border:1px solid #7a7a7a"></div>
<div class="t" style="left:1419px;top:427px;font-size:12px;font-family:'Liberation Mono',monospace;transform:none">0.10</div>
<svg style="left:0;top:0" width="1445" height="912">
<rect x="1389.5" y="457.5" width="60" height="34" fill="#e1e1e1" stroke="#adadad"/>
<rect x="1389.5" y="496.5" width="60" height="33" fill="#e1e1e1" stroke="#adadad"/>
<rect x="1389.5" y="534.5" width="60" height="34" fill="#e1e1e1" stroke="#adadad"/>
<rect x="1389.5" y="573.5" width="60" height="34" fill="#e1e1e1" stroke="#adadad"/>
<rect x="1389.5" y="611.5" width="60" height="34" fill="#e1e1e1" stroke="#adadad"/>

<rect x="1406.5" y="467.5" width="23" height="14" fill="#fff" stroke="#444" stroke-width=".8"/><path d="M1406 472h2v4h-2z" fill="#888"/><path d="M1409 482h4v5h-4zM1416 482h4v5h-4zM1423 482h4v5h-4zM1424 463h4v5h-4z" fill="#1ab01a" stroke="#0a600a" stroke-width=".5"/>
<path d="M1405 466C1408 460 1416 459 1421 464" fill="none" stroke="#0a600a" stroke-width="4.6"/><path d="M1405 466C1408 460 1416 459 1421 464" fill="none" stroke="#6ad030" stroke-width="3"/><path d="M1417 459L1426 469L1414 469z" fill="#6ad030" stroke="#0a600a" stroke-width=".7"/>
<rect x="1404.5" y="503.5" width="26" height="15" fill="#505050" stroke="#222" stroke-width=".8"/><path d="M1408 499h4v4h-4zM1415 499h4v4h-4zM1422 499h4v4h-4z" fill="#eee" stroke="#444" stroke-width=".6"/><path d="M1418 507l4-2h8v9l-4 2h-8z" fill="#4a86d0" stroke="#1b3560" stroke-width=".7"/>
<path d="M1409 516C1413 523 1420 524 1425 522" fill="none" stroke="#0a600a" stroke-width="4.6"/><path d="M1409 516C1413 523 1420 524 1425 522" fill="none" stroke="#6ad030" stroke-width="3"/><path d="M1422 517L1431 524L1420 527z" fill="#6ad030" stroke="#0a600a" stroke-width=".7"/>
<path d="M1402 555L1419 546L1434 553V560L1417 568L1402 561z" fill="#e0b000" stroke="#6a4a00" stroke-width=".9"/><path d="M1402 555L1419 546L1434 553L1417 561z" fill="#f5d22a" stroke="#6a4a00" stroke-width=".7"/><path d="M1417 561V568" stroke="#6a4a00" stroke-width=".7"/><path d="M1410 553l5-2 4 2-5 2z" fill="none" stroke="#b08000" stroke-width=".7"/>
<path d="M1403 540C1407 536 1413 537 1416 541" fill="none" stroke="#0a600a" stroke-width="4.6"/><path d="M1403 540C1407 536 1413 537 1416 541" fill="none" stroke="#6ad030" stroke-width="3"/><path d="M1411 538L1420 547L1408 546z" fill="#6ad030" stroke="#0a600a" stroke-width=".7"/>
<path d="M1407 581V598C1407 601 1412 602 1417 602S1427 601 1427 598V581z" fill="#e8cf2a" stroke="#5a4a00" stroke-width=".8"/><ellipse cx="1417" cy="581" rx="10" ry="3.5" fill="#f8e86a" stroke="#5a4a00" stroke-width=".8"/>
<path d="M1413 594C1417 600 1423 600 1426 597" fill="none" stroke="#0a600a" stroke-width="4.6"/><path d="M1413 594C1417 600 1423 600 1426 597" fill="none" stroke="#6ad030" stroke-width="3"/><path d="M1422 593L1431 601L1420 603z" fill="#6ad030" stroke="#0a600a" stroke-width=".7"/>
<rect x="1406.5" y="616.5" width="22" height="23" fill="#f4f4f4" stroke="#d0d0d0"/><path d="M1409 620h17" stroke="#ddd"/><path d="M1411 625l4-4 11 11-4 4z" fill="#f0d020" stroke="#333" stroke-width=".9"/><path d="M1422 636l4-4 1 5z" fill="#f5e0b0" stroke="#333" stroke-width=".7"/><path d="M1426 636l1 1" stroke="#000" stroke-width="1.5"/>
</svg>

<!--RIGHTPANEL-->


<!-- title icon -->
<svg style="left:0;top:0" width="40" height="30"><g transform="translate(9 7)"><path d="M0 0h9v3H3.5v3H8v3H3.5v7H0z" fill="#d91c1c" stroke="#7a0a0a" stroke-width=".5"/><circle cx="11" cy="11" r="4.2" fill="#3a64b0"/><circle cx="11" cy="11" r="1.6" fill="#fff"/><path d="M11 5.5v2M11 14.5v2M5.5 11h2M14.5 11h2M7 7l1.4 1.4M13.6 13.6L15 15M15 7l-1.4 1.4M8.4 13.6L7 15" stroke="#3a64b0" stroke-width="1.6"/></g></svg>
<!-- tab bar -->
<div class="a" style="left:273px;top:728px;width:1107px;height:1px;background:#a8a8a8"></div>
<div class="a" style="left:275px;top:729px;width:402px;height:20px;background:#f0f0f0;border:1px solid #d0d0d0;border-top:none"></div>
<div class="a" style="left:387px;top:731px;width:1px;height:17px;background:#d0d0d0"></div>
<div class="a" style="left:541px;top:731px;width:1px;height:17px;background:#d0d0d0"></div>
<div class="a" style="left:676px;top:728px;width:162px;height:24px;background:#fff;border:1px solid #d6d6d6;border-top:none"></div>
<svg style="left:0;top:0" width="1445" height="912"><g transform="translate(285 731)"><path d="M0 0h9v3H3.5v3H8v3H3.5v7H0z" fill="#d91c1c" stroke="#7a0a0a" stroke-width=".5"/><circle cx="11" cy="11" r="4.2" fill="#3a64b0"/><circle cx="11" cy="11" r="1.6" fill="#fff"/><path d="M11 5.5v2M11 14.5v2M5.5 11h2M14.5 11h2M7 7l1.4 1.4M13.6 13.6L15 15M15 7l-1.4 1.4M8.4 13.6L7 15" stroke="#3a64b0" stroke-width="1.6"/></g><g transform="translate(400 731)"><path d="M0 0h9v3H3.5v3H8v3H3.5v7H0z" fill="#d91c1c" stroke="#7a0a0a" stroke-width=".5"/><circle cx="11" cy="11" r="4.2" fill="#3a64b0"/><circle cx="11" cy="11" r="1.6" fill="#fff"/><path d="M11 5.5v2M11 14.5v2M5.5 11h2M14.5 11h2M7 7l1.4 1.4M13.6 13.6L15 15M15 7l-1.4 1.4M8.4 13.6L7 15" stroke="#3a64b0" stroke-width="1.6"/></g><g transform="translate(553 731)"><path d="M0 0h9v3H3.5v3H8v3H3.5v7H0z" fill="#d91c1c" stroke="#7a0a0a" stroke-width=".5"/><circle cx="11" cy="11" r="4.2" fill="#3a64b0"/><circle cx="11" cy="11" r="1.6" fill="#fff"/><path d="M11 5.5v2M11 14.5v2M5.5 11h2M14.5 11h2M7 7l1.4 1.4M13.6 13.6L15 15M15 7l-1.4 1.4M8.4 13.6L7 15" stroke="#3a64b0" stroke-width="1.6"/></g><g transform="translate(690 732)"><path d="M0 0h9v3H3.5v3H8v3H3.5v7H0z" fill="#d91c1c" stroke="#7a0a0a" stroke-width=".5"/><circle cx="11" cy="11" r="4.2" fill="#3a64b0"/><circle cx="11" cy="11" r="1.6" fill="#fff"/><path d="M11 5.5v2M11 14.5v2M5.5 11h2M14.5 11h2M7 7l1.4 1.4M13.6 13.6L15 15M15 7l-1.4 1.4M8.4 13.6L7 15" stroke="#3a64b0" stroke-width="1.6"/></g>
<rect x="360.5" y="732.5" width="13" height="13" rx="1.5" fill="#d4d4d4" stroke="#b8b8b8"/><path d="M364 736l6 6M370 736l-6 6" stroke="#fff" stroke-width="1.8"/>
<rect x="513.5" y="732.5" width="13" height="13" rx="1.5" fill="#d4d4d4" stroke="#b8b8b8"/><path d="M517 736l6 6M523 736l-6 6" stroke="#fff" stroke-width="1.8"/>
<rect x="650.5" y="732.5" width="13" height="13" rx="1.5" fill="#d4d4d4" stroke="#b8b8b8"/><path d="M654 736l6 6M660 736l-6 6" stroke="#fff" stroke-width="1.8"/>
<rect x="809.5" y="732.5" width="14" height="14" rx="1.5" fill="#e0603a" stroke="#c04a2a"/><path d="M813 736l7 7M820 736l-7 7" stroke="#fff" stroke-width="2"/>
</svg>
<div class="t" style="left:304px;top:733px">Start page</div>
<div class="t" style="left:419px;top:733px;transform:scaleX(.89)">Doorbell Holder : 1</div>
<div class="t" style="left:572px;top:733px">Unnamed1 : 1*</div>
<div class="t" style="left:709px;top:734px">tomu_0.4_case : 1*</div>
<!-- python console -->
<div class="a" style="left:1px;top:757px;width:1443px;height:1px;background:#a0a0a0"></div>
<div class="a" style="left:1px;top:758px;width:1443px;height:18px;background:#d9d9d9"></div>
<div class="t" style="left:2px;top:762px;font-size:11px;transform:scaleX(.97)">Python console</div>
<svg style="left:0;top:0" width="1445" height="912">
<rect x="1414.5" y="764.5" width="5" height="5" fill="none" stroke="#000" stroke-width="1.3"/><path d="M1416.5 764.5v-2.5h5v5h-2" fill="none" stroke="#000" stroke-width="1.3"/>
<path d="M1431.5 762.5l7 7M1438.5 762.5l-7 7" stroke="#000" stroke-width="1.5"/>
</svg>
<div class="a" style="left:1px;top:777px;width:1443px;height:105px;background:#fff;border:1px solid #828790"></div>
<div class="a" style="left:1426px;top:778px;width:17px;height:103px;background:#f0f0f0"></div>
<div class="a" style="left:1427px;top:846px;width:15px;height:17px;background:#cdcdcd"></div>
<svg style="left:0;top:0" width="1445" height="912">
<path d="M1431 791l3.5-3.5 3.5 3.5" fill="none" stroke="#606060" stroke-width="1.6"/>
<path d="M1431 870l3.5 3.5 3.5-3.5" fill="none" stroke="#606060" stroke-width="1.6"/>
</svg>
<div class="a" style="left:6px;top:780px;font-family:'Liberation Mono',monospace;font-size:13.33px;line-height:16px;white-space:pre;color:#000"><span style="color:#a0a0a0">&gt;&gt;&gt; </span>App<span style="color:#a0a0a0">.</span>getDocument<span style="color:#a0a0a0">(</span><span style="color:#f00">'tomu_0_4_case'</span><span style="color:#a0a0a0">).</span>recompute<span style="color:#a0a0a0">()</span>
<span style="color:#a0a0a0">&gt;&gt;&gt; </span>Gui<span style="color:#a0a0a0">.</span>getDocument<span style="color:#a0a0a0">(</span><span style="color:#f00">"tomu_0_4_case"</span><span style="color:#a0a0a0">).</span>getObject<span style="color:#a0a0a0">(</span><span style="color:#f00">"Sketch005"</span><span style="color:#a0a0a0">).</span>Visibility<span style="color:#a0a0a0">=</span>False
<span style="color:#a0a0a0">&gt;&gt;&gt; </span>Gui<span style="color:#a0a0a0">.</span>activeDocument<span style="color:#a0a0a0">().</span>activeView<span style="color:#a0a0a0">().</span>viewAxonometric<span style="color:#a0a0a0">()</span>
<span style="color:#a0a0a0">&gt;&gt;&gt; </span>Gui<span style="color:#a0a0a0">.</span>activeDocument<span style="color:#a0a0a0">().</span>activeView<span style="color:#a0a0a0">().</span>viewFront<span style="color:#a0a0a0">()</span>
<span style="color:#a0a0a0">&gt;&gt;&gt; </span>Gui<span style="color:#a0a0a0">.</span>activeDocument<span style="color:#a0a0a0">().</span>activeView<span style="color:#a0a0a0">().</span>viewAxonometric<span style="color:#a0a0a0">()</span>
<span style="color:#a0a0a0">&gt;&gt;&gt; </span></div>
<!-- status bar -->
<div class="a" style="left:1218px;top:884px;width:1px;height:25px;background:#d9d9d9"></div>
<div class="a" style="left:1299px;top:884px;width:1px;height:25px;background:#d9d9d9"></div>
<div class="a" style="left:1425px;top:884px;width:1px;height:25px;background:#d9d9d9"></div>
<svg style="left:0;top:0" width="1445" height="912">
<rect x="1241.5" y="890.5" width="9" height="13" rx="4.5" fill="none" stroke="#444" stroke-width="1.4"/><path d="M1246 893v3" stroke="#444" stroke-width="1.2"/>
<path d="M1283 895h8l-4 5z" fill="#000"/>
<path d="M1439 902h1M1436 905h1M1439 905h1M1433 908h1M1436 908h1M1439 908h1" stroke="#aaa" stroke-width="1.5"/>
</svg>
<div class="t" style="left:1258px;top:891px">CAD</div>
<div class="t" style="left:1304px;top:891px">26.24 mm x 13.61 mm</div>

<!--BOTTOM-->

<div class="a" style="left:0;top:0;width:1445px;height:912px;border:1px solid #7ab8f2"></div>
</body></html>
